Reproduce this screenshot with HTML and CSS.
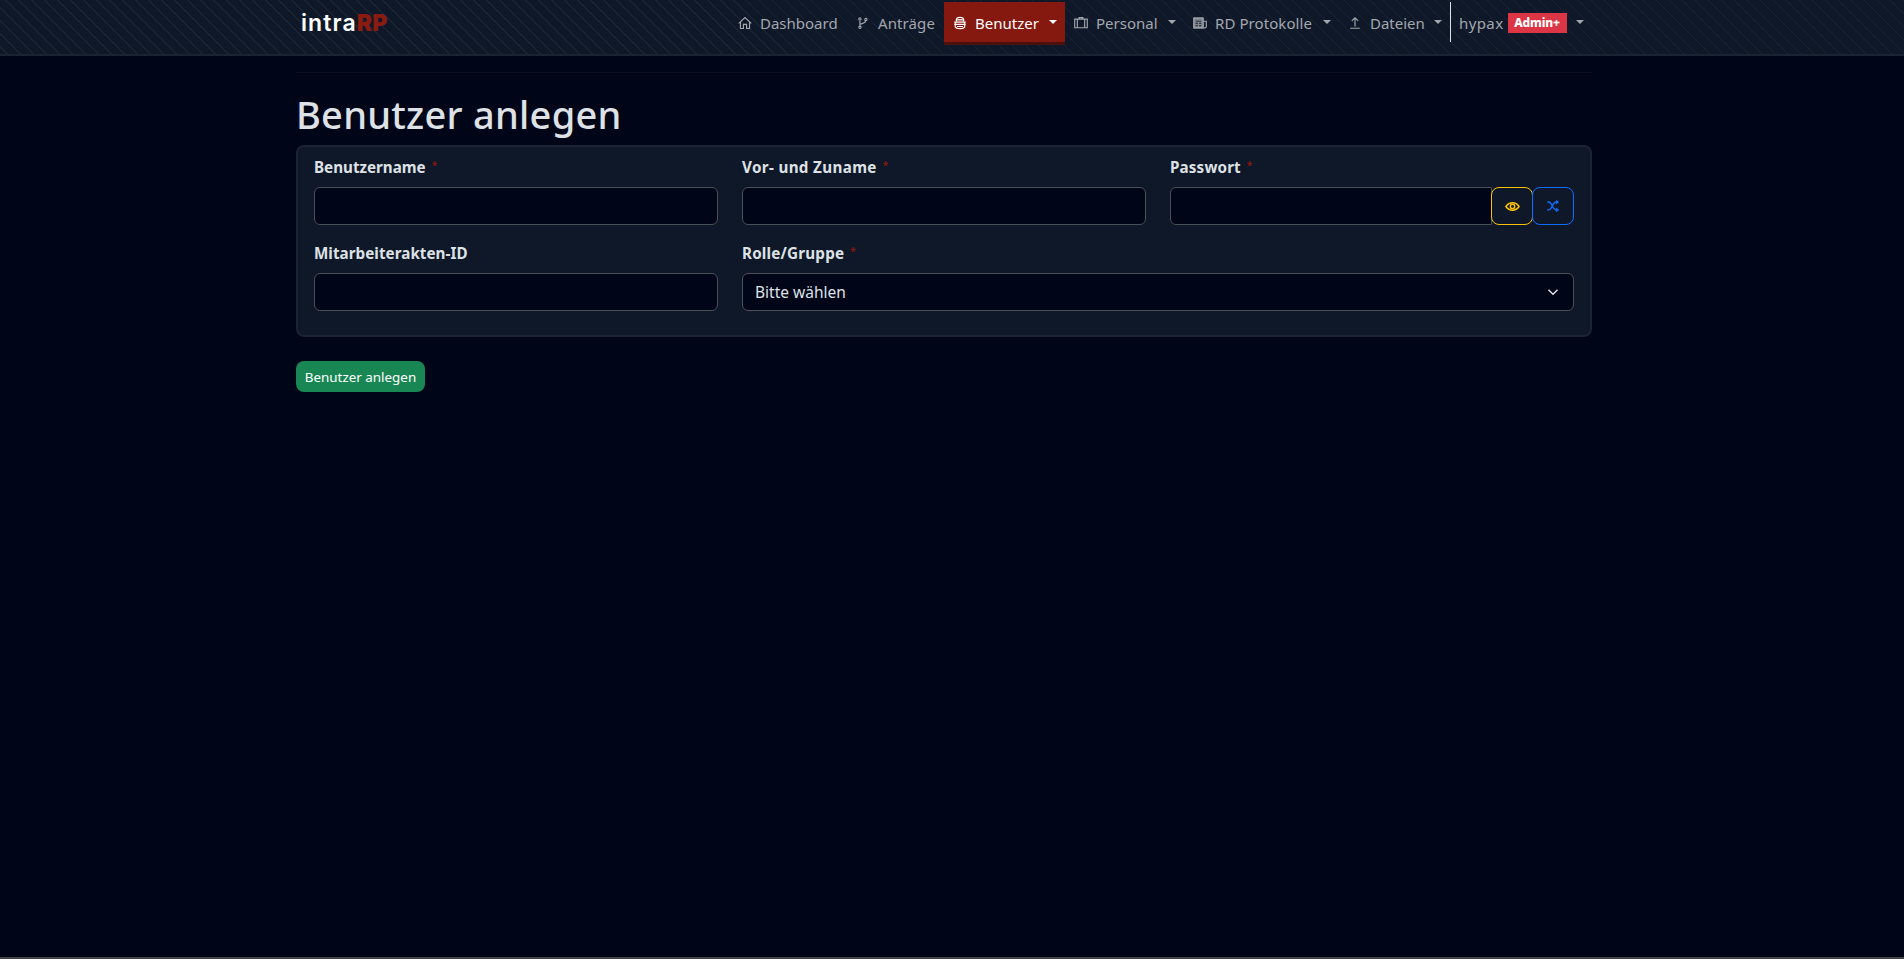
FILE: index.html
```html
<!DOCTYPE html>
<html lang="de">
<head>
<meta charset="utf-8">
<title>Benutzer anlegen</title>
<link rel="stylesheet" href="styles.css">
</head>
<body>
<nav class="navbar">
  <div class="nav-inner">
    <a class="brand"><span class="brand-a">intra</span><span class="brand-b">RP</span></a>
    <div class="nav-links">
      <a class="link w-dash"><svg class="ico" viewBox="0 0 16 16"><path d="M.8 8.500 8 1.800l7.200 6.700M2.800 7v7.300h3.400V9.500h3.600v4.800h3.400V7"/></svg><span>Dashboard</span></a>
      <a class="link w-antr"><svg class="ico" viewBox="0 0 16 16"><path d="M4.500 5v6.500M4.500 10c0-2 6.500-.5 6.500-4.500"/><circle cx="4.500" cy="3.300" r="1.300"/><circle cx="4.500" cy="12.800" r="1.300"/><circle cx="11.300" cy="4" r="1.300"/></svg><span>Anträge</span></a>
      <a class="link active"><svg class="ico" viewBox="0 0 16 16"><path d="M3.800 6V4.200C3.800 2.500 5 1.500 8 1.500s4.200 1 4.200 2.700V6M3.800 4.500h8.400M1.500 7h13M1.500 9.500h13M2.500 7.500v4c0 2 2 3 5.500 3s5.500-1 5.500-3v-4M4.500 12h7"/></svg><span>Benutzer</span><i class="caret"></i></a>
      <a class="link w-pers"><svg class="ico" viewBox="0 0 16 16"><path d="M.8 3.600h14.400v9.800H.8zM3.800 3.600v9.800M12.200 3.600v9.800M5.800 3.500V1.800h4.400v1.700"/></svg><span>Personal</span><i class="caret"></i></a>
      <a class="link w-rd"><svg class="ico" viewBox="0 0 16 16"><path class="fill" d="M1 2.500h10.500v11H1z"/><path d="M1 2.500h10.500v11H1zM11.500 6h3.700v6.300c0 1.500-2.500 1.500-3.700 1.200"/><path class="cut" d="M3 6h6.500M3 8.500h2.500M7 8.500h2.500M3 11h2.500M7 11h2.500"/></svg><span>RD Protokolle</span><i class="caret"></i></a>
      <a class="link w-dat"><svg class="ico" viewBox="0 0 16 16"><path d="M8 12V2M4.300 5.600 8 2l3.700 3.600M2.500 14h11"/></svg><span>Dateien</span><i class="caret"></i></a>
      <a class="link user"><span class="t-user">hypax</span><span class="badge">Admin+</span><i class="caret"></i></a>
    </div>
  </div>
</nav>
<main class="container">
  <hr class="rule">
  <h1 class="title">Benutzer anlegen</h1>
  <form>
    <div class="card">
      <div class="field"><label>Benutzername</label><sup class="req">*</sup><input class="input" type="text"></div>
      <div class="field"><label class="l-full">Vor- und Zuname</label><sup class="req">*</sup><input class="input" type="text"></div>
      <div class="field"><label class="l-pass">Passwort</label><sup class="req">*</sup>
        <div class="group"><input class="input joined" type="password"><button type="button" class="ib yellow"><svg viewBox="0 0 16 16"><path d="M1 8c2-3 4.500-4 7-4s5 1 7 4c-2 3-4.500 4-7 4S3 11 1 8z"/><circle cx="8" cy="8" r="2.300"/></svg></button><button type="button" class="ib blue"><svg viewBox="0 0 16 16"><path d="M1.500 3.500h1.500c4 0 4.500 9 8.500 9H13M1.500 12.500h1.500c4 0 4.500-9 8.500-9H13"/><path class="tip" d="M11.500.8 15 3.500l-3.500 2.700zM11.500 9.800l3.500 2.700-3.500 2.700z"/></svg></button></div></div>
      <div class="field"><label class="l-id">Mitarbeiterakten-ID</label><input class="input" type="text"></div>
      <div class="field wide"><label class="l-role">Rolle/Gruppe</label><sup class="req">*</sup><div class="input select"><span>Bitte wählen</span><svg viewBox="0 0 16 16"><path d="m2 5 6 6 6-6"/></svg></div></div>
    </div>
    <button type="button" class="submit"><span>Benutzer anlegen</span></button>
  </form>
</main>
<div class="edge"></div>
</body>
</html>
```
FILE: styles.css
```css
* { box-sizing: border-box; }
html, body { height: 100%; }
body { margin: 0; display: flex; flex-direction: column; overflow: hidden; background: #000517; color: #dee2e6; font: 16px/24px "Noto Sans", sans-serif; }
svg { fill: none; stroke: currentColor; stroke-width: 1.3; flex: none; }
.navbar { height: 56px; flex: none; border-bottom: 2px solid #1a2332; background: repeating-linear-gradient(45deg, transparent 0 4.6px, #1a2332 4.6px 5.8px, transparent 5.8px 9.19px) #0f1828; }
.nav-inner { width: 1296px; margin: 0 0 0 296px; padding: 2px 0 0 5px; display: flex; justify-content: space-between; }
.brand { font: 600 23px/43px Inter, sans-serif; color: #fff; display: flex; }
.brand-a { letter-spacing: 1.1px; }
.brand-b { color: #8b1a10; font-weight: 900; letter-spacing: 0; }
.nav-links { display: flex; height: 43px; font-size: 15px; }
.link { display: flex; align-items: center; padding: 1px 8px 3px; color: #a3a7ad; white-space: nowrap; }
.ico { width: 14px; height: 14px; margin-right: 8px; }
.fill { fill: currentColor; opacity: .75; }
.cut { stroke: #30394a; }
.caret { margin: -2px 0 0 auto; border: 4px solid transparent; border-top-color: currentColor; border-bottom: 0; }
.active { width: 121px; background: #86190f; color: #fff; border-bottom: 3px solid #4c100d; padding-bottom: 0; }
.w-dash { width: 118px; }
.w-antr { width: 96px; letter-spacing: 0.1px; }
.w-pers { width: 119px; }
.w-rd { width: 155px; letter-spacing: 0.08px; }
.w-dat { width: 111px; }
.active .ico, .w-pers .ico, .w-rd .ico, .w-dat .ico { margin: 0 8px 0 1px; }
.user { width: 142px; height: 40px; border-left: 1px solid #dee2e6; padding: 2px 8px 0; }
.t-user { letter-spacing: 0.4px; line-height: 24px; padding-bottom: 1px; }
.badge { background: #dc3545; color: #fff; width: 59px; height: 20px; margin-left: 4px; font: 800 12px/20px "Noto Sans", sans-serif; letter-spacing: -0.2px; text-align: center; }
.container { width: 1296px; margin: 0 0 0 296px; flex: 1; }
.rule { height: 1px; border: 0; margin: 16px 0; background: #0b0f20; }
.title { margin: 0; padding-top: 1px; height: 56px; font-size: 38px; line-height: 48px; font-weight: 500; letter-spacing: 0.25px; }
.card { height: 192px; border: 2px solid #1a2332; border-radius: 8px; background: #0f1828; padding: 8px 16px; display: grid; grid-template-columns: repeat(3, 404px); column-gap: 24px; grid-auto-rows: 86px; }
.field { white-space: nowrap; }
.wide { grid-column: span 2; }
label { display: inline-block; font-size: 15.2px; font-weight: 700; line-height: 24px; }
.l-full { letter-spacing: 0.35px; }
.l-pass { letter-spacing: 0.15px; }
.l-id { letter-spacing: 0.05px; }
.l-role { letter-spacing: 0.2px; }
.req { display: inline-block; color: #86190f; font-size: 10px; font-weight: 700; line-height: 10px; margin-left: 6px; vertical-align: 4px; }
.input { display: block; width: 100%; height: 38px; margin-top: 8px; background: #000517; border: 1px solid #495057; border-radius: 6px; color: #dee2e6; }
.select { display: flex; align-items: center; justify-content: space-between; padding: 0 12px; font-size: 15.5px; }
.select svg { width: 12px; height: 12px; stroke-width: 2; margin-right: 2px; }
.group { display: flex; margin-top: 8px; }
.joined { margin: 0; width: 322px; border-radius: 6px 0 0 6px; }
.ib { width: 42px; height: 38px; margin-left: -1px; padding: 0; display: flex; align-items: center; justify-content: center; background: #0f1828; border: 1px solid; border-radius: 8px; }
.ib svg { width: 15px; height: 15px; stroke-width: 1.6; }
.blue svg { width: 14px; height: 14px; }
.tip { fill: currentColor; stroke: none; }
.yellow { color: #ffc107; }
.blue { color: #0d6efd; }
.submit { display: flex; align-items: center; justify-content: center; width: 129px; height: 31px; margin-top: 24px; padding: 1px 0 0; border: 0; border-radius: 8px; background: #198754; color: #fff; font: 13.4px/21px "Noto Sans", sans-serif; white-space: nowrap; }
.edge { height: 2px; background: #444; }
```
